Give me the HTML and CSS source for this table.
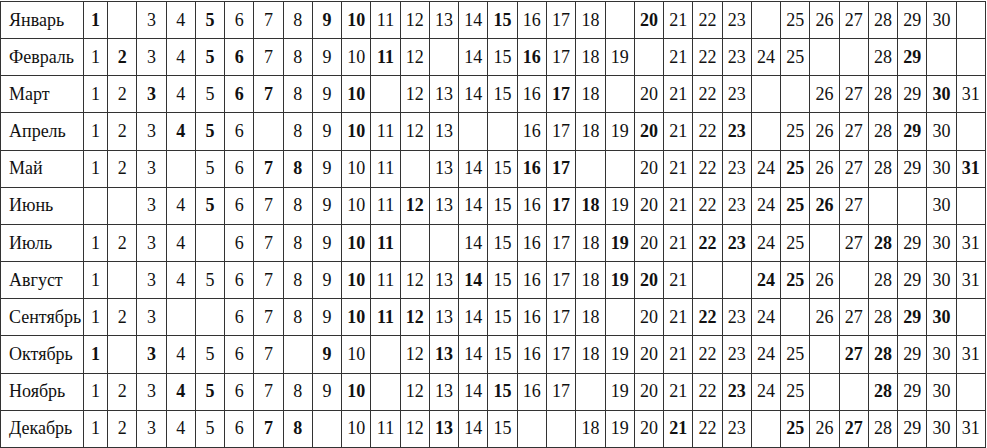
FILE: index.html
```html
<!DOCTYPE html>
<html lang="ru">
<head>
<meta charset="utf-8">
<title>Календарь</title>
<link rel="stylesheet" href="styles.css">
</head>
<body>
<table class="cal">
<colgroup><col class="c-month"><col class="c-first"></colgroup>
<tbody>
<tr><th>Январь</th><td class="b">1</td><td></td><td>3</td><td>4</td><td class="b">5</td><td>6</td><td>7</td><td>8</td><td class="b">9</td><td class="b">10</td><td>11</td><td>12</td><td>13</td><td>14</td><td class="b">15</td><td>16</td><td>17</td><td>18</td><td></td><td class="b">20</td><td>21</td><td>22</td><td>23</td><td></td><td>25</td><td>26</td><td>27</td><td>28</td><td>29</td><td>30</td><td></td></tr>
<tr><th>Февраль</th><td>1</td><td class="b">2</td><td>3</td><td>4</td><td class="b">5</td><td class="b">6</td><td>7</td><td>8</td><td>9</td><td>10</td><td class="b">11</td><td>12</td><td></td><td>14</td><td>15</td><td class="b">16</td><td>17</td><td>18</td><td>19</td><td></td><td>21</td><td>22</td><td>23</td><td>24</td><td>25</td><td></td><td></td><td>28</td><td class="b">29</td><td></td><td></td></tr>
<tr><th>Март</th><td>1</td><td>2</td><td class="b">3</td><td>4</td><td>5</td><td class="b">6</td><td class="b">7</td><td>8</td><td>9</td><td class="b">10</td><td></td><td>12</td><td>13</td><td>14</td><td>15</td><td>16</td><td class="b">17</td><td>18</td><td></td><td>20</td><td>21</td><td>22</td><td>23</td><td></td><td></td><td>26</td><td>27</td><td>28</td><td>29</td><td class="b">30</td><td>31</td></tr>
<tr><th>Апрель</th><td>1</td><td>2</td><td>3</td><td class="b">4</td><td class="b">5</td><td>6</td><td></td><td>8</td><td>9</td><td class="b">10</td><td>11</td><td>12</td><td>13</td><td></td><td></td><td>16</td><td>17</td><td>18</td><td>19</td><td class="b">20</td><td>21</td><td>22</td><td class="b">23</td><td></td><td>25</td><td>26</td><td>27</td><td>28</td><td class="b">29</td><td>30</td><td></td></tr>
<tr><th>Май</th><td>1</td><td>2</td><td>3</td><td></td><td>5</td><td>6</td><td class="b">7</td><td class="b">8</td><td>9</td><td>10</td><td>11</td><td></td><td>13</td><td>14</td><td>15</td><td class="b">16</td><td class="b">17</td><td></td><td></td><td>20</td><td>21</td><td>22</td><td>23</td><td>24</td><td class="b">25</td><td>26</td><td>27</td><td>28</td><td>29</td><td>30</td><td class="b">31</td></tr>
<tr><th>Июнь</th><td></td><td></td><td>3</td><td>4</td><td class="b">5</td><td>6</td><td>7</td><td>8</td><td>9</td><td>10</td><td>11</td><td class="b">12</td><td>13</td><td>14</td><td>15</td><td>16</td><td class="b">17</td><td class="b">18</td><td>19</td><td>20</td><td>21</td><td>22</td><td>23</td><td>24</td><td class="b">25</td><td class="b">26</td><td>27</td><td></td><td></td><td>30</td><td></td></tr>
<tr><th>Июль</th><td>1</td><td>2</td><td>3</td><td>4</td><td></td><td>6</td><td>7</td><td>8</td><td>9</td><td class="b">10</td><td class="b">11</td><td></td><td></td><td>14</td><td>15</td><td>16</td><td>17</td><td>18</td><td class="b">19</td><td>20</td><td>21</td><td class="b">22</td><td class="b">23</td><td>24</td><td>25</td><td></td><td>27</td><td class="b">28</td><td>29</td><td>30</td><td>31</td></tr>
<tr><th>Август</th><td>1</td><td></td><td>3</td><td>4</td><td>5</td><td>6</td><td>7</td><td>8</td><td>9</td><td class="b">10</td><td>11</td><td>12</td><td>13</td><td class="b">14</td><td>15</td><td>16</td><td>17</td><td>18</td><td class="b">19</td><td class="b">20</td><td>21</td><td></td><td></td><td class="b">24</td><td class="b">25</td><td>26</td><td></td><td>28</td><td>29</td><td>30</td><td>31</td></tr>
<tr><th>Сентябрь</th><td>1</td><td>2</td><td>3</td><td></td><td></td><td>6</td><td>7</td><td>8</td><td>9</td><td class="b">10</td><td class="b">11</td><td class="b">12</td><td>13</td><td>14</td><td>15</td><td>16</td><td>17</td><td>18</td><td></td><td>20</td><td>21</td><td class="b">22</td><td>23</td><td>24</td><td></td><td>26</td><td>27</td><td>28</td><td class="b">29</td><td class="b">30</td><td></td></tr>
<tr><th>Октябрь</th><td class="b">1</td><td></td><td class="b">3</td><td>4</td><td>5</td><td>6</td><td>7</td><td></td><td class="b">9</td><td>10</td><td></td><td>12</td><td class="b">13</td><td>14</td><td>15</td><td>16</td><td>17</td><td>18</td><td>19</td><td>20</td><td>21</td><td>22</td><td>23</td><td>24</td><td>25</td><td></td><td class="b">27</td><td class="b">28</td><td>29</td><td>30</td><td>31</td></tr>
<tr><th>Ноябрь</th><td>1</td><td>2</td><td>3</td><td class="b">4</td><td class="b">5</td><td>6</td><td>7</td><td>8</td><td>9</td><td class="b">10</td><td></td><td>12</td><td>13</td><td>14</td><td class="b">15</td><td>16</td><td>17</td><td></td><td>19</td><td>20</td><td>21</td><td>22</td><td class="b">23</td><td>24</td><td>25</td><td></td><td></td><td class="b">28</td><td>29</td><td>30</td><td></td></tr>
<tr><th>Декабрь</th><td>1</td><td>2</td><td>3</td><td>4</td><td>5</td><td>6</td><td class="b">7</td><td class="b">8</td><td></td><td>10</td><td>11</td><td>12</td><td class="b">13</td><td>14</td><td>15</td><td></td><td></td><td>18</td><td>19</td><td>20</td><td class="b">21</td><td>22</td><td>23</td><td></td><td class="b">25</td><td>26</td><td class="b">27</td><td>28</td><td>29</td><td>30</td><td>31</td></tr>
</tbody>
</table>
</body>
</html>
```
FILE: styles.css
```css
html, body {
  margin: 0;
  padding: 0;
  background: #fff;
}
body {
  padding-top: 1px;
  font-family: "Liberation Serif", "DejaVu Serif", serif;
  font-size: 18px;
  color: #111;
}
.cal {
  border-collapse: collapse;
  table-layout: fixed;
  width: 986px;
}
.c-month { width: 83px; }
.c-first { width: 24px; }
.cal th,
.cal td {
  border: 1px solid #333;
  height: 36.17px;
  padding: 0;
  vertical-align: middle;
  white-space: nowrap;
}
.cal th {
  text-align: left;
  font-weight: normal;
  padding-left: 8px;
}
.cal td {
  text-align: center;
}
.cal td.b {
  font-weight: bold;
}
```
